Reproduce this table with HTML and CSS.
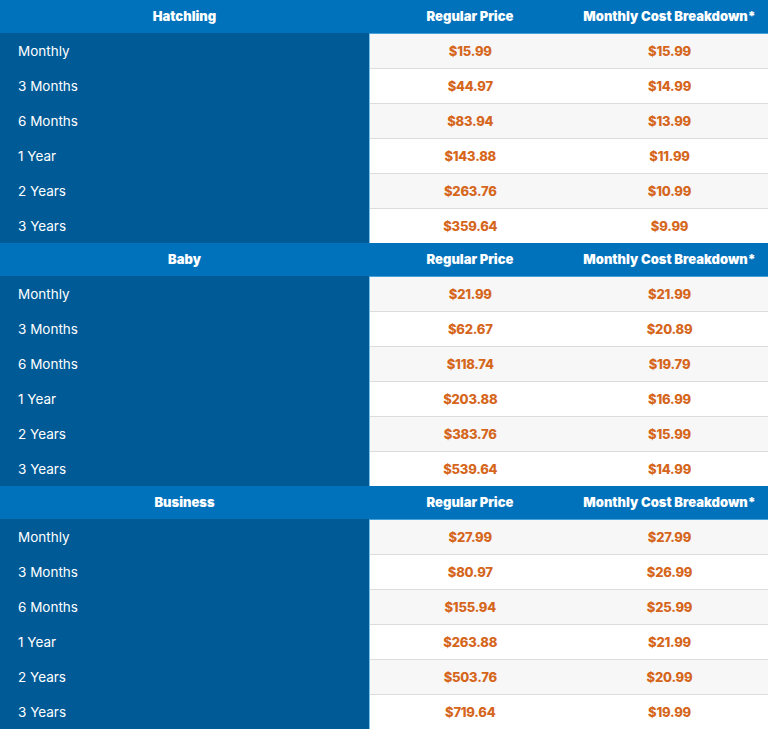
FILE: index.html
```html
<!DOCTYPE html>
<html>
<head>
<meta charset="utf-8">
<link rel="stylesheet" href="styles.css">
</head>
<body>
<table class="pricing">
  <colgroup><col class="c-term"><col class="c-reg"><col class="c-mon"></colgroup>
  <tbody class="plan">
    <tr class="head"><th>Hatchling</th><th>Regular Price</th><th>Monthly Cost Breakdown*</th></tr>
    <tr><td class="term">Monthly</td><td class="price">$15.99</td><td class="price">$15.99</td></tr>
    <tr><td class="term">3 Months</td><td class="price">$44.97</td><td class="price">$14.99</td></tr>
    <tr><td class="term">6 Months</td><td class="price">$83.94</td><td class="price">$13.99</td></tr>
    <tr><td class="term">1 Year</td><td class="price">$143.88</td><td class="price">$11.99</td></tr>
    <tr><td class="term">2 Years</td><td class="price">$263.76</td><td class="price">$10.99</td></tr>
    <tr><td class="term">3 Years</td><td class="price">$359.64</td><td class="price">$9.99</td></tr>
  </tbody>
  <tbody class="plan">
    <tr class="head"><th>Baby</th><th>Regular Price</th><th>Monthly Cost Breakdown*</th></tr>
    <tr><td class="term">Monthly</td><td class="price">$21.99</td><td class="price">$21.99</td></tr>
    <tr><td class="term">3 Months</td><td class="price">$62.67</td><td class="price">$20.89</td></tr>
    <tr><td class="term">6 Months</td><td class="price">$118.74</td><td class="price">$19.79</td></tr>
    <tr><td class="term">1 Year</td><td class="price">$203.88</td><td class="price">$16.99</td></tr>
    <tr><td class="term">2 Years</td><td class="price">$383.76</td><td class="price">$15.99</td></tr>
    <tr><td class="term">3 Years</td><td class="price">$539.64</td><td class="price">$14.99</td></tr>
  </tbody>
  <tbody class="plan">
    <tr class="head"><th>Business</th><th>Regular Price</th><th>Monthly Cost Breakdown*</th></tr>
    <tr><td class="term">Monthly</td><td class="price">$27.99</td><td class="price">$27.99</td></tr>
    <tr><td class="term">3 Months</td><td class="price">$80.97</td><td class="price">$26.99</td></tr>
    <tr><td class="term">6 Months</td><td class="price">$155.94</td><td class="price">$25.99</td></tr>
    <tr><td class="term">1 Year</td><td class="price">$263.88</td><td class="price">$21.99</td></tr>
    <tr><td class="term">2 Years</td><td class="price">$503.76</td><td class="price">$20.99</td></tr>
    <tr><td class="term">3 Years</td><td class="price">$719.64</td><td class="price">$19.99</td></tr>
  </tbody>
</table>
</body>
</html>
```
FILE: styles.css
```css
html, body {
  margin: 0;
  padding: 0;
  background: #ffffff;
}
body {
  font-family: Inter, "Open Sans", sans-serif;
}
.pricing {
  width: 768px;
  border-collapse: collapse;
  table-layout: fixed;
}
.c-term { width: 369px; }
.c-reg { width: 202px; }
.c-mon { width: 197px; }

.head th {
  height: 33px;
  padding: 0 0 1px;
  background: #0072bc;
  color: #ffffff;
  font-size: 13px;
  font-weight: 900;
  letter-spacing: 0;
  text-align: center;
  vertical-align: middle;
  box-sizing: border-box;
}
.head th + th {
  border-bottom: 1px solid #4aa0d8;
}
.plan td {
  height: 35px;
  padding: 0;
  box-sizing: border-box;
  vertical-align: middle;
  border-top: 1px solid #dcdcdc;
}
.plan tr:nth-child(2) td {
  border-top: none;
}
.plan tr:nth-child(even) td.price {
  background: #f7f7f7;
}
.term {
  background: #005a96;
  color: #ffffff;
  font-size: 13.5px;
  font-weight: 400;
  padding-left: 18px !important;
  border-top: none !important;
  border-right: 1px solid #7cc1ea;
}
.price {
  background: #ffffff;
  color: #d5661c;
  font-size: 13px;
  font-weight: 800;
  text-align: center;
  letter-spacing: -0.2px;
}
```
